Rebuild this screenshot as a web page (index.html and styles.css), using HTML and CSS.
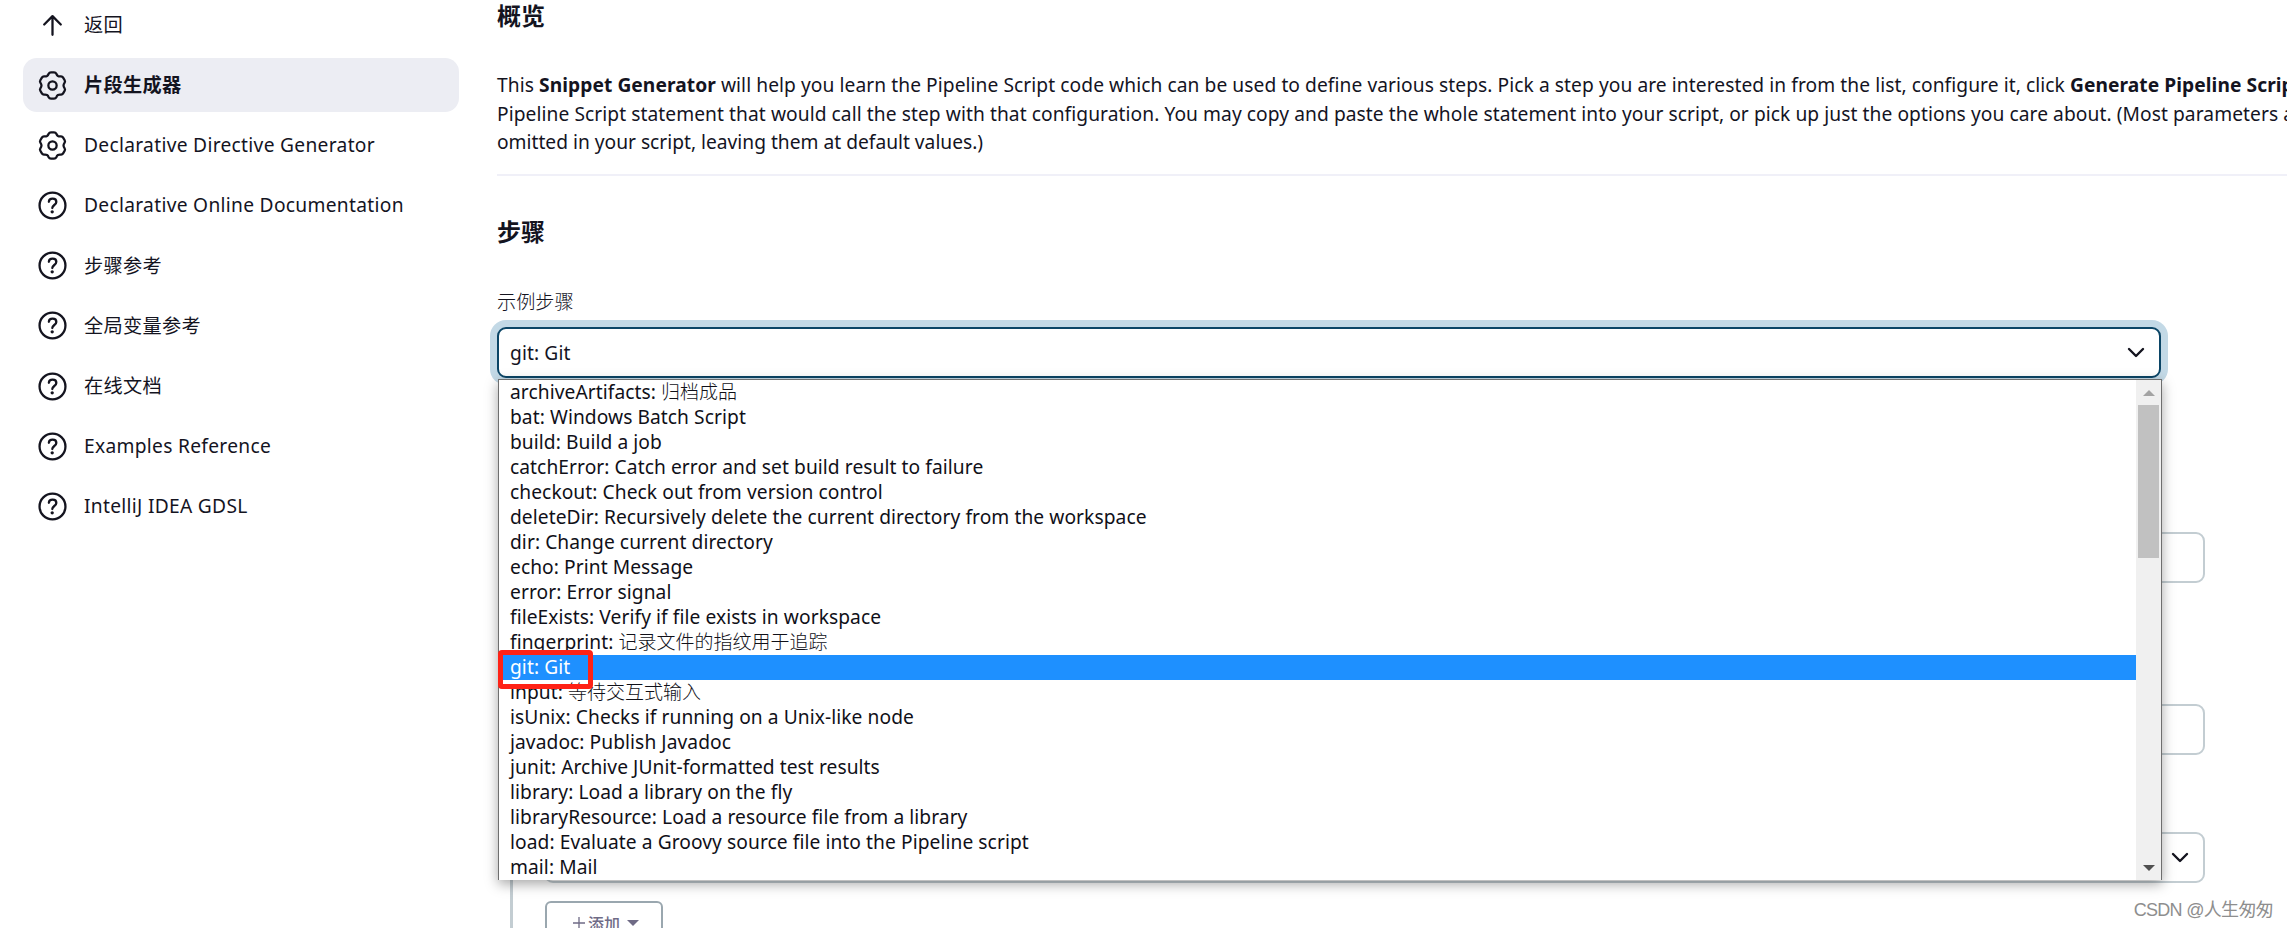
FILE: index.html
```html
<!DOCTYPE html>
<html lang="zh-CN">
<head>
    <meta charset="UTF-8">
    <meta name="viewport" content="width=device-width, initial-scale=1.0">
    <title>片段生成器</title>
    <link rel="stylesheet" href="styles.css">
</head>
<body>

<svg class="icon-defs" width="0" height="0">
    <symbol id="icon-gear" viewBox="-14 -14 28 28">
        <path d="M-1.5-12.7H1.5Q3-12.7 3.7-11.3Q4.3-9.8 5.3-9.2Q6.34-8.62 7.9-8.8Q9.5-8.95 10.25-7.65L11.75-5.05Q12.5-3.75 11.6-2.5Q10.64-1.18 10.64 0Q10.64 1.18 11.6 2.5Q12.5 3.75 11.75 5.05L10.25 7.65Q9.5 8.95 7.9 8.8Q6.34 8.62 5.3 9.2Q4.3 9.8 3.7 11.3Q3 12.7 1.5 12.7H-1.5Q-3 12.7-3.7 11.3Q-4.3 9.8-5.3 9.2Q-6.34 8.62-7.9 8.8Q-9.5 8.95-10.25 7.65L-11.75 5.05Q-12.5 3.75-11.6 2.5Q-10.64 1.18-10.64 0Q-10.64-1.18-11.6-2.5Q-12.5-3.75-11.75-5.05L-10.25-7.65Q-9.5-8.95-7.9-8.8Q-6.34-8.62-5.3-9.2Q-4.3-9.8-3.7-11.3Q-3-12.7-1.5-12.7Z"/>
        <circle cx="0" cy="0" r="4"/>
    </symbol>
    <symbol id="icon-help" viewBox="-14 -14 28 28">
        <circle cx="0" cy="0" r="12.5"/>
        <path d="M-3.5-3.6C-3.3-7.6 3.7-7.5 3.7-3.5C3.7-.6-.2-.4-.2 2.4"/>
        <circle class="dot" cx="-.3" cy="6.1" r="1.6"/>
    </symbol>
    <symbol id="icon-up" viewBox="-14 -14 28 28">
        <path d="M-8-1L0-9L8-1M0-9V9"/>
    </symbol>
    <symbol id="icon-chevron" viewBox="0 0 18 12">
        <path d="M2 2L9 9L16 2"/>
    </symbol>
</svg>

<div class="page">
    <nav class="sidebar">
        <a class="task"><svg class="icon"><use href="#icon-up"/></svg><span>返回</span></a>
        <a class="task active"><svg class="icon"><use href="#icon-gear"/></svg><span>片段生成器</span></a>
        <a class="task"><svg class="icon"><use href="#icon-gear"/></svg><span>Declarative Directive Generator</span></a>
        <a class="task"><svg class="icon"><use href="#icon-help"/></svg><span>Declarative Online Documentation</span></a>
        <a class="task"><svg class="icon"><use href="#icon-help"/></svg><span>步骤参考</span></a>
        <a class="task"><svg class="icon"><use href="#icon-help"/></svg><span>全局变量参考</span></a>
        <a class="task"><svg class="icon"><use href="#icon-help"/></svg><span>在线文档</span></a>
        <a class="task"><svg class="icon"><use href="#icon-help"/></svg><span>Examples Reference</span></a>
        <a class="task"><svg class="icon"><use href="#icon-help"/></svg><span>IntelliJ IDEA GDSL</span></a>
    </nav>

    <main class="main-panel">
        <h2>概览</h2>
        <p class="intro"><span class="wide">This <b>Snippet Generator</b> will help you learn the Pipeline Script code which can be used to define various steps. Pick a step you are interested in from the list, configure it, click <b>Generate Pipeline Script</b><br>
            Pipeline Script statement that would call the step with that configuration. You may copy and paste the whole statement into your script, or pick up just the options you care about. (Most parameters are</span><br>
            omitted in your script, leaving them at default values.)</p>

        <h2 class="steps-title">步骤</h2>
        <div class="label">示例步骤</div>

        <div class="select-wrap">
            <div class="select focused">
                <span>git: Git</span>
                <svg class="chevron"><use href="#icon-chevron"/></svg>
            </div>

            <div class="dropdown">
                <ul class="options">
                    <li>archiveArtifacts: <span class="cjk">归档成品</span></li>
                    <li>bat: Windows Batch Script</li>
                    <li>build: Build a job</li>
                    <li>catchError: Catch error and set build result to failure</li>
                    <li>checkout: Check out from version control</li>
                    <li>deleteDir: Recursively delete the current directory from the workspace</li>
                    <li>dir: Change current directory</li>
                    <li>echo: Print Message</li>
                    <li>error: Error signal</li>
                    <li>fileExists: Verify if file exists in workspace</li>
                    <li>fingerprint: <span class="cjk">记录文件的指纹用于追踪</span></li>
                    <li class="selected">git: Git</li>
                    <li>input: <span class="cjk">等待交互式输入</span></li>
                    <li>isUnix: Checks if running on a Unix-like node</li>
                    <li>javadoc: Publish Javadoc</li>
                    <li>junit: Archive JUnit-formatted test results</li>
                    <li>library: Load a library on the fly</li>
                    <li>libraryResource: Load a resource file from a library</li>
                    <li>load: Evaluate a Groovy source file into the Pipeline script</li>
                    <li>mail: Mail</li>
                </ul>
                <div class="scrollbar">
                    <div class="scroll-btn"><i class="arrow-up"></i></div>
                    <div class="thumb"></div>
                    <div class="scroll-btn bottom"><i class="arrow-down"></i></div>
                </div>
                <div class="highlight"></div>
            </div>
        </div>

        <div class="step-config">
            <div class="input"></div>
            <div class="input"></div>
            <div class="select">
                <span></span>
                <svg class="chevron"><use href="#icon-chevron"/></svg>
            </div>
            <div class="add-button">
                <svg class="plus" viewBox="0 0 12 12"><path d="M6 0V12M0 6H12"/></svg>
                <span>添加</span>
                <i class="caret"></i>
            </div>
        </div>
    </main>
</div>

<div class="watermark">CSDN @人生匆匆</div>

</body>
</html>
```

FILE: styles.css
```css
* {
    box-sizing: border-box;
}

body {
    margin: 0;
    height: 928px;
    overflow: hidden;
    position: relative;
    background: #fff;
    color: #14141f;
    font-family: "Noto Sans", "Noto Sans CJK SC", sans-serif;
    font-size: 19.2px;
}

.icon-defs {
    display: block;
}

.page {
    display: flex;
    height: 928px;
}

/* sidebar */
.sidebar {
    flex: none;
    width: 497px;
    padding-left: 23px;
    margin-top: -2px;
    display: flex;
    flex-direction: column;
    gap: 6.2px;
}

.task {
    display: flex;
    align-items: center;
    width: 436px;
    height: 54px;
    padding-left: 15px;
    border-radius: 14px;
    letter-spacing: 0.3px;
    white-space: nowrap;
}

.task span {
    margin-left: 17px;
    padding-bottom: 2px;
}

.task.active {
    background: #ecedf3;
    font-weight: 700;
}

.icon {
    width: 29px;
    height: 29px;
    fill: none;
    stroke: #14141f;
    stroke-width: 2.2;
    stroke-linecap: round;
    stroke-linejoin: round;
}

.dot {
    fill: #14141f;
    stroke: none;
}

/* main */
.main-panel {
    flex: none;
    width: 1790px;
}

h2 {
    margin: 0;
    height: 32px;
    line-height: 31px;
    font-size: 24px;
    font-weight: 700;
}

.intro {
    margin: 39px 0 0;
    height: 105px;
    border-bottom: 2px solid #f0f0f8;
    line-height: 28.6px;
    white-space: nowrap;
}

.wide {
    letter-spacing: 0.07px;
}

.steps-title {
    margin-top: 39px;
    line-height: 34px;
}

.label {
    margin-top: 40px;
    height: 28px;
    line-height: 30px;
    font-weight: 300;
}

.select-wrap {
    position: relative;
    width: 1664px;
    margin-top: 12px;
}

.select,
.input {
    height: 51px;
    border: 2px solid #c3cdd2;
    border-radius: 9px;
    background: #fff;
}

.select {
    display: flex;
    align-items: center;
    justify-content: space-between;
    padding: 0 14px 0 11px;
}

.select span {
    padding-bottom: 1px;
    letter-spacing: 0.1px;
}

.select.focused {
    border-color: #0b4566;
    box-shadow: 0 0 0 7px #c3d9e6;
}

.chevron {
    width: 18px;
    height: 12px;
    fill: none;
    stroke: #14141f;
    stroke-width: 2.4;
    stroke-linecap: round;
    stroke-linejoin: round;
}

/* open list, lies over the form below */
.dropdown {
    position: absolute;
    z-index: 5;
    top: 52px;
    left: 1px;
    width: 1664px;
    height: 501px;
    display: flex;
    border: 1px solid #6e6e6e;
    border-bottom: none;
    background: #fff;
    box-shadow: 0 4px 12px rgba(0, 0, 0, 0.35);
}

.options {
    flex: 1;
    margin: 0;
    padding: 0;
    list-style: none;
    color: #101018;
    letter-spacing: 0.07px;
}

.options li {
    height: 25px;
    line-height: 23px;
    padding-left: 11px;
    white-space: nowrap;
}

.options .cjk {
    font-size: 19px;
    font-weight: 300;
    letter-spacing: 0;
}

.options .selected {
    background: #1e90ff;
    color: #fff;
}

.scrollbar {
    width: 25px;
    background: #f0f0f0;
    display: flex;
    flex-direction: column;
}

.scroll-btn {
    height: 25px;
    display: flex;
    align-items: center;
    justify-content: center;
}

.scroll-btn.bottom {
    margin-top: auto;
}

.arrow-up {
    border: 6px solid transparent;
    border-top: none;
    border-bottom-color: #a3a3a3;
}

.arrow-down {
    border: 6px solid transparent;
    border-bottom: none;
    border-top-color: #505050;
}

.thumb {
    height: 153px;
    margin: 0 2px;
    background: #c1c1c1;
}

.highlight {
    position: absolute;
    top: 270px;
    left: -1px;
    width: 95px;
    height: 39px;
    border: 5px solid #ff2216;
    border-radius: 4px;
}

/* step configuration */
.step-config {
    margin: 60px 0 0 13px;
    width: 1695px;
    height: 490px;
    padding: 94px 0 0 31px;
    border-left: 3px solid #c3cdd2;
}

.step-config .input {
    margin-bottom: 121px;
}

.step-config .input + .input {
    margin-bottom: 77px;
}

.add-button {
    width: 118px;
    height: 51px;
    margin: 18px 0 0 1px;
    display: flex;
    align-items: center;
    justify-content: center;
    border: 2px solid #9aa7af;
    border-radius: 6px;
    color: #6f6b86;
    font-size: 16px;
    font-weight: 500;
    padding: 0 0 8px 4px;
}

.plus {
    width: 12px;
    height: 12px;
    margin-right: 3px;
    fill: none;
    stroke: #6f6b86;
    stroke-width: 1.3;
}

.caret {
    margin-left: 7px;
    border: 6px solid transparent;
    border-bottom: none;
    border-top-color: #6f6b86;
}

.watermark {
    position: absolute;
    right: 14px;
    bottom: 5px;
    line-height: 26px;
    color: #8e8e8e;
    font-family: "Liberation Sans", "Noto Sans CJK SC", sans-serif;
    font-size: 18px;
    letter-spacing: -0.7px;
}
```
